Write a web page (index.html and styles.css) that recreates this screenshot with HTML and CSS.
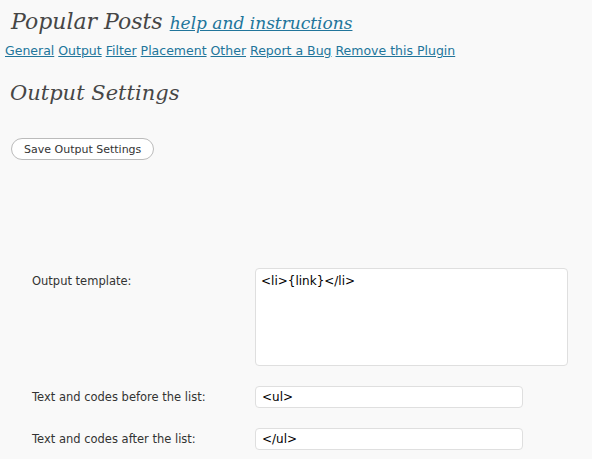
FILE: index.html
```html
<!DOCTYPE html>
<html lang="en">
<head>
    <meta charset="UTF-8">
    <meta name="viewport" content="width=device-width, initial-scale=1.0">
    <title>Popular Posts - Output Settings</title>
    <link rel="stylesheet" href="styles.css">
</head>
<body>
    <div class="wrap">
        <h2 class="page-title">Popular Posts <a href="#" class="help">help and instructions</a></h2>
        <div class="tabs">
            <a href="#">General</a>
            <a href="#">Output</a>
            <a href="#">Filter</a>
            <a href="#">Placement</a>
            <a href="#">Other</a>
            <a href="#">Report a Bug</a>
            <a href="#">Remove this Plugin</a>
        </div>

        <h2 class="section-title">Output Settings</h2>

        <form>
            <button type="button" class="button">Save Output Settings</button>

            <table class="form-table">
                <tr>
                    <th>Output template:</th>
                    <td><textarea class="big" spellcheck="false">&lt;li&gt;{link}&lt;/li&gt;</textarea></td>
                </tr>
                <tr>
                    <th>Text and codes before the list:</th>
                    <td><input type="text" value="&lt;ul&gt;"></td>
                </tr>
                <tr>
                    <th>Text and codes after the list:</th>
                    <td><input type="text" value="&lt;/ul&gt;"></td>
                </tr>
            </table>
        </form>
    </div>
</body>
</html>
```

FILE: styles.css
```css
html, body {
    margin: 0;
    background: #f9f9f9;
}
body {
    font-family: "DejaVu Sans", Verdana, sans-serif;
    color: #333;
}
a {
    color: #21759b;
}
.wrap {
    padding: 0 5px;
}
.page-title {
    margin: 0;
    padding: 8px 0 0 6px;
    font-family: "DejaVu Serif", Georgia, serif;
    font-style: italic;
    font-weight: normal;
    font-size: 22px;
    line-height: 28px;
    color: #464646;
}
.page-title .help {
    font-size: 17px;
}
.tabs {
    margin-top: 6px;
    font-size: 12.5px;
    line-height: 16px;
}
.section-title {
    margin: 20px 0 0 5px;
    font-family: "DejaVu Serif", Georgia, serif;
    font-style: italic;
    font-weight: normal;
    font-size: 21px;
    line-height: 28px;
    color: #464646;
}
.button {
    margin: 31px 0 0 6px;
    height: 22px;
    padding: 0 12px;
    border: 1px solid #bbb;
    border-radius: 11px;
    background: #fff;
    color: #333;
    font-family: "DejaVu Sans", Verdana, sans-serif;
    font-size: 11px;
}
.form-table {
    margin-top: 108px;
    border-collapse: collapse;
}
.form-table th {
    width: 223px;
    padding: 0 0 0 27px;
    text-align: left;
    vertical-align: top;
    font-weight: normal;
    font-size: 11.5px;
    line-height: 15px;
}
.form-table td {
    padding: 0 0 20px 0;
}
.form-table tr:first-child th {
    padding-top: 6px;
}
.form-table tr + tr th {
    padding-top: 4px;
}
textarea, input {
    box-sizing: border-box;
    border: 1px solid #dfdfdf;
    border-radius: 4px;
    background: #fff;
    color: #000;
    font-family: "DejaVu Sans", Tahoma, sans-serif;
    font-size: 12px;
    margin: 0;
}
textarea {
    display: block;
    width: 313px;
    height: 98px;
    padding: 5px 5px;
    resize: none;
}
input {
    display: block;
    width: 268px;
    height: 22px;
    padding: 0 6px;
}
```
